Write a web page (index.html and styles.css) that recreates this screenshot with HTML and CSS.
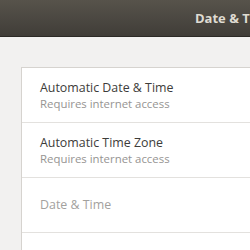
FILE: index.html
```html
<!DOCTYPE html>
<html lang="en">
<head>
  <meta charset="UTF-8" />
  <title>Date &amp; Time</title>
  <link rel="stylesheet" href="styles.css">
</head>
<body>

  <div class="headerbar">
    <div class="title">Date &amp; Time</div>
  </div>

  <div class="content">
    <div class="list">
      <div class="row">
        <div class="row-title">Automatic Date &amp; Time</div>
        <div class="row-sub">Requires internet access</div>
      </div>
      <div class="row">
        <div class="row-title">Automatic Time Zone</div>
        <div class="row-sub">Requires internet access</div>
      </div>
      <div class="row">
        <div class="row-title dim">Date &amp; Time</div>
      </div>
      <div class="row"></div>
    </div>
  </div>

</body>
</html>
```

FILE: styles.css
```css
body {
  margin: 0;
  padding: 0;
  width: 250px;
  height: 250px;
  overflow: hidden;
  font-family: 'Open Sans', sans-serif;
  background: #f2f1f0;
}

.headerbar {
  height: 36px;
  background: linear-gradient(#57534b, #403d38);
  border-bottom: 1px solid #2c2a26;
  display: flex;
  align-items: center;
  padding-left: 195px;
  overflow: hidden;
  white-space: nowrap;
}

.title {
  color: #dfdbd2;
  font-weight: bold;
  font-size: 13px;
}

.content {
  padding: 30px 0 0 21px;
}

.list {
  background: white;
  border: 1px solid #d6d3cf;
  border-right: none;
  border-bottom: none;
}

.row {
  height: 54px;
  padding-left: 18px;
  border-bottom: 1px solid #e3e1de;
  display: flex;
  flex-direction: column;
  justify-content: center;
}

.row-title {
  font-size: 12.4px;
  line-height: 16px;
  color: #3d3c3a;
}

.row-sub {
  font-size: 11.4px;
  line-height: 15px;
  color: #969492;
}

.dim {
  color: #a3a19e;
}
```
